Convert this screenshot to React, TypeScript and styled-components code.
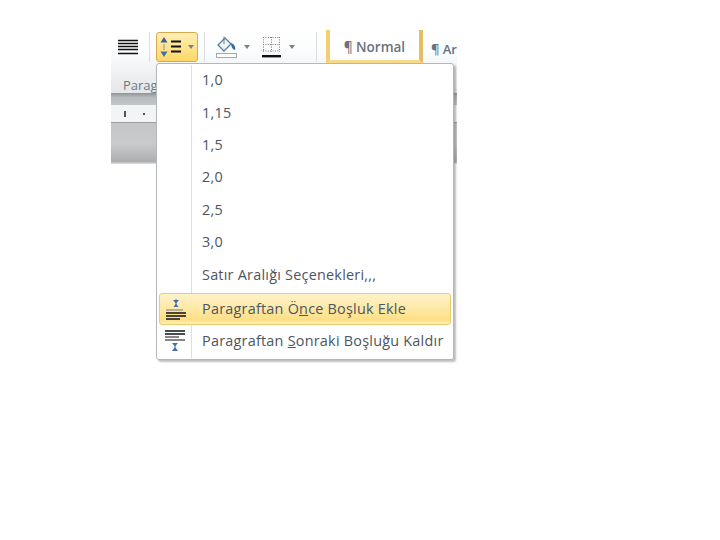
import React from "react";
import styled, { createGlobalStyle } from "styled-components";

const Global = createGlobalStyle`
  html, body { margin: 0; padding: 0; background: #fff; }
  body { width: 720px; height: 540px; overflow: hidden; font-family: "Open Sans", "Liberation Sans", sans-serif; }
`;
const Page = styled.div`
  position: relative;
  width: 720px;
  height: 540px;
  padding: 30px 0 0 111px;
  box-sizing: border-box;
`;
const Ribbon = styled.div`
  width: 346px;
  display: flex;
  flex-direction: column;
`;
const Tools = styled.div`
  height: 63px;
  box-sizing: border-box;
  background: linear-gradient(#fff 0, #fbfcfd 35%, #eceef0 75%, #e4e6e8 100%);
`;
const ToolRow = styled.div`
  height: 33px;
  display: flex;
  align-items: center;
  padding: 0 0 0 7px;
  box-sizing: border-box;
`;
const Btn = styled.div`
  width: 42px;
  height: 30px;
  box-sizing: border-box;
  display: flex;
  align-items: center;
  justify-content: center;
  gap: 1px;
  border-radius: 3px;
  border: 1px solid #d9a94f;
  background: linear-gradient(#fdeeb3, #fde38a 55%, #fdd766);
`;
const Sep = styled.div<{ $ml: number; $mr: number }>`
  width: 1px;
  height: 30px;
  background: #dcdfe2;
  margin: 0 ${(p) => p.$mr}px 0 ${(p) => p.$ml}px;
`;
const Caret = styled.span<{ $ml?: number; $mr?: number }>`
  width: 0;
  height: 0;
  border: 3px solid transparent;
  border-top: 4px solid #7a8088;
  border-bottom: 0;
  margin: 0 ${(p) => p.$mr ?? 0}px 0 ${(p) => p.$ml ?? 0}px;
`;
const StyleNormal = styled.div`
  width: 97px;
  height: 33px;
  margin-top: -1px;
  padding-top: 5px;
  box-sizing: border-box;
  border-left: 4px solid #f3cf73;
  border-right: 4px solid #e6bd62;
  border-bottom: 3px solid #f6d98b;
  background: #fff;
  display: flex;
  align-items: center;
  justify-content: center;
  font-size: 13.5px;
  font-weight: 600;
  color: #66737e;
`;
const StyleNext = styled.div`
  margin-left: 8px;
  padding-top: 5px;
  font-size: 13px;
  font-weight: 600;
  color: #66737e;
  white-space: nowrap;
`;
const GroupLabel = styled.div`
  font-size: 13px;
  color: #6f7882;
  padding: 14px 0 0 12px;
  line-height: 16px;
`;
const Band = styled.div`
  height: 12px;
  background: linear-gradient(#8f9398, #b6b9bd 35%, #c4c7ca);
`;
const Ruler = styled.div`
  height: 18px;
  box-sizing: border-box;
  background: #f3f4f5;
  border-bottom: 1px solid #9a9da1;
  display: flex;
  align-items: center;
  padding-left: 13px;
  gap: 17px;
`;
const Tick = styled.i<{ $h: number }>`
  display: block;
  width: 2px;
  height: ${(p) => p.$h}px;
  background: #555;
`;
const Gutter = styled.div`
  height: 41px;
  background: linear-gradient(#c4c6c8, #c8cacc 50%, #acaeb1 94%, #e3e4e5);
`;
const Menu = styled.div`
  position: absolute;
  left: 156px;
  top: 63px;
  width: 298px;
  height: 297px;
  box-sizing: border-box;
  background: #fff;
  border: 1px solid #b4b7ba;
  border-radius: 3px;
  box-shadow: 2px 2px 2px rgba(110, 110, 110, 0.45);
  z-index: 2;
`;
const Rail = styled.div`
  position: absolute;
  left: 34px;
  top: 1px;
  bottom: 1px;
  width: 1px;
  background: #dcdee0;
`;
const Item = styled.div<{ $hot?: boolean; $gap?: number }>`
  position: relative;
  height: 32.4px;
  display: flex;
  align-items: center;
  margin: ${(p) => p.$gap ?? 0}px 2px 0;
  padding: 0 0 1px 43px;
  box-sizing: border-box;
  font-size: 14.4px;
  letter-spacing: 0.24px;
  color: #4d5560;
  white-space: pre;
  ${(p) =>
    p.$hot &&
    `
    border: 1px solid #ecca6e;
    border-radius: 3px;
    padding: 0 0 0 42px;
    background: linear-gradient(#fdf3c9, #fde9a5 50%, #fddf86 85%, #fdeeb6);
  `}
`;
const ItemIcon = styled.svg`
  position: absolute;
  left: 5px;
  top: 50%;
  transform: translateY(-50%);
`;
const U = styled.span`
  text-decoration: underline;
`;

const LineSpacingIcon = () => (
  <svg width="28" height="24" viewBox="0 0 28 24">
    <path d="M5 9V15" stroke="#8a8f96" strokeWidth="1" />
    <path d="M5 2 1.5 7.5h7z" fill="#3f5f92" />
    <path d="M5 22 1.5 16.5h7z" fill="#3f6fb0" />
    <path d="M12 6.5h10M12 11.5h10M12 16.5h10" stroke="#111" strokeWidth="2" />
  </svg>
);
const AlignIcon = () => (
  <svg width="20" height="16" viewBox="0 0 20 16">
    <path d="M0 1.5h20M0 4.5h20M0 7.5h20M0 10.5h20M0 14.5h20" stroke="#111" strokeWidth="1.4" />
  </svg>
);
const FillIcon = () => (
  <svg width="22" height="24" viewBox="0 0 22 24">
    <path d="M9 3 2 10l6 6 7-7z" fill="#eef3f8" stroke="#5f7f9f" strokeWidth="1.3" />
    <path d="M8 1.5V9" stroke="#777" />
    <path d="M15 8c3 1 5 4 4 7-2 0-4-3-4-7z" fill="#2f6ea8" />
    <rect x="0.5" y="18.5" width="20" height="4" fill="#fff" stroke="#a5a9ad" />
  </svg>
);
const BorderIcon = () => (
  <svg width="19" height="22" viewBox="0 0 19 22">
    <path d="M1 1.5h17M1 8.5h17M1 15h17M1.5 1v15M9.5 1v15M17.5 1v15" stroke="#777" strokeDasharray="1 1.4" fill="none" />
    <rect x="0" y="19" width="19" height="2.4" fill="#111" />
  </svg>
);

const values = ["1,0", "1,15", "1,5", "2,0", "2,5", "3,0"];

export default function App() {
  return (
    <Page>
      <Global />
      <Ribbon>
        <Tools>
          <ToolRow>
            <AlignIcon />
            <Sep $ml={11} $mr={6} />
            <Btn>
              <LineSpacingIcon />
              <Caret />
            </Btn>
            <Sep $ml={6} $mr={11} />
            <FillIcon />
            <Caret $ml={6} $mr={12} />
            <BorderIcon />
            <Caret $ml={8} />
            <Sep $ml={21} $mr={9} />
            <StyleNormal>¶ Normal</StyleNormal>
            <StyleNext>¶ Ar</StyleNext>
          </ToolRow>
          <GroupLabel>Paragraf</GroupLabel>
        </Tools>
        <Band />
        <Ruler>
          <Tick $h={6} />
          <Tick $h={2} />
        </Ruler>
        <Gutter />
      </Ribbon>
      <Menu>
        <Rail />
        {values.map((v) => (
          <Item key={v}>{v}</Item>
        ))}
        <Item>Satır Aralığı Seçenekleri,,,</Item>
        <Item $hot $gap={2}>
          <ItemIcon width="22" height="24" viewBox="0 0 22 24">
            <path d="M11 2v6" stroke="#5c7fb0" />
            <path d="M8 3 11 6.5 14 3z M8.5 10h5L11 6.5z" fill="#3f6fb0" />
            <path d="M1 13h17" stroke="#777" strokeWidth="1" />
            <path d="M1 16h20M1 19h20M1 22h14" stroke="#111" strokeWidth="1.4" />
          </ItemIcon>
          <span>Paragraftan Ö<U>n</U>ce Boşluk Ekle</span>
        </Item>
        <Item>
          <ItemIcon width="22" height="24" viewBox="0 0 22 24">
            <path d="M1 2h20M1 5h20" stroke="#111" strokeWidth="1.5" />
            <path d="M1 8h14M1 11h20" stroke="#111" strokeWidth="1.1" />
            <path d="M11 14v8" stroke="#5c7fb0" />
            <path d="M8 14h6l-3 3.5z M8 22 11 18 14 22z" fill="#3f6fb0" />
          </ItemIcon>
          <span>Paragraftan <U>S</U>onraki Boşluğu Kaldır</span>
        </Item>
      </Menu>
    </Page>
  );
}
